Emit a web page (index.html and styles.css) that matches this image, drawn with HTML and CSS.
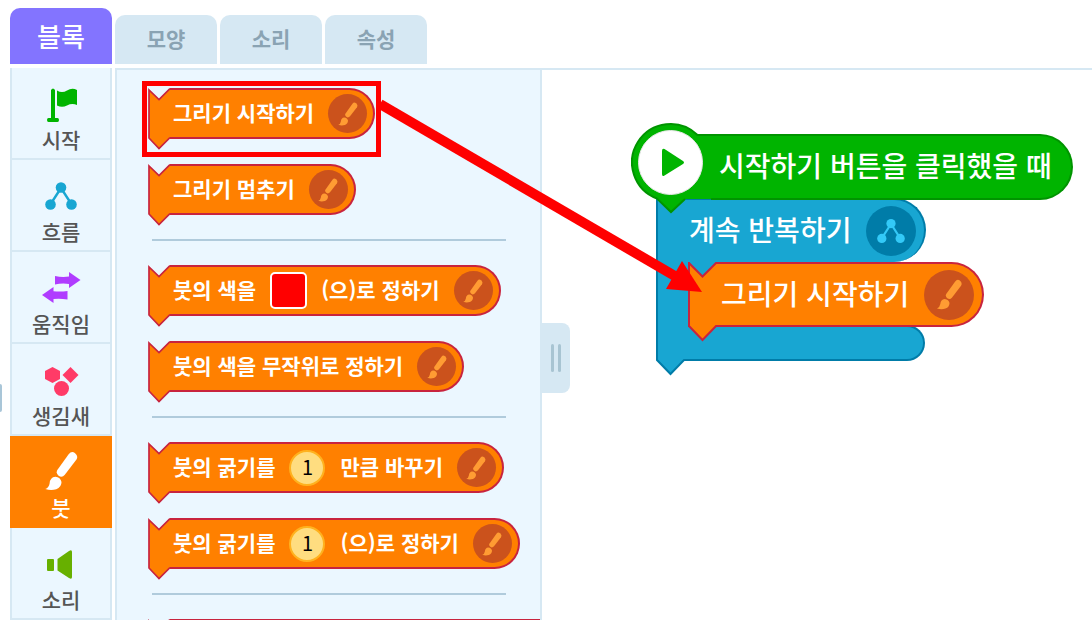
FILE: index.html
```html
<!DOCTYPE html>
<html lang="ko">
<head>
    <meta charset="UTF-8">
    <title>블록 코딩</title>
    <link rel="stylesheet" href="styles.css">
</head>
<body>
    <!-- shared icons -->
    <svg class="sprite" aria-hidden="true">
        <symbol id="brush" viewBox="0 0 34 42">
            <path d="M24.500 3.500Q27.500 -.5 31 2Q35 5 32.700 9L20.500 25Q17.500 28.500 14 26Q10.500 23 13 19.500Z"/>
            <path d="M0 40Q4 38 4.500 34Q5 27.500 10.500 27Q16 27.500 17 32.500Q17 38 11.500 40.200Q6 42 0 40Z"/>
        </symbol>
        <symbol id="flow" viewBox="0 0 32 28">
            <path d="M5 23L16 6L27 23" fill="none" stroke="currentColor" stroke-width="2.400"/>
            <circle cx="16" cy="5.500" r="5.300"/>
            <circle cx="5.500" cy="22.500" r="5.300"/>
            <circle cx="26.500" cy="22.500" r="5.300"/>
        </symbol>
        <symbol id="cap" viewBox="0 0 22 62">
            <path d="M22 50H21.500L11 60.500L1 50V2L11 11.500L21.500 1H22Z" stroke="none"/>
            <path d="M22 50H21.500L11 60.500L1 50V2L11 11.500L21.500 1H22" fill="none" stroke-width="1.700"/>
        </symbol>
    </svg>

    <nav class="tabs">
        <button type="button" class="tab active">블록</button>
        <button type="button" class="tab">모양</button>
        <button type="button" class="tab">소리</button>
        <button type="button" class="tab">속성</button>
    </nav>

    <main class="editor">
        <div class="side-grip"></div>
        <nav class="categories">
            <button type="button" class="category">
                <svg class="icon start" viewBox="0 0 40 40"><path d="M10 7Q12 4 14 7V35H16.500Q18 35 18 37T16.500 39H7.500Q6 39 6 37T7.500 35H10Z"/><path d="M16 7.500Q21 10.500 26 7.500Q31 4.500 36 7V22Q31 20 26 22.500Q21 25 16 22.500Z"/></svg>
                <span>시작</span>
            </button>
            <button type="button" class="category">
                <svg class="icon flow"><use href="#flow" x="4" y="7" width="32" height="28"/></svg>
                <span>흐름</span>
            </button>
            <button type="button" class="category">
                <svg class="icon moving" viewBox="0 0 40 40"><path d="M14 9Q21 10.500 28 9.500V5L39.500 13L28 21V17Q21 16 14 17.500Z"/><path d="M26.500 24Q19 25 12.500 24.200V20L1 28L12.500 36V32Q19 31.200 26.500 32.500Z"/></svg>
                <span>움직임</span>
            </button>
            <button type="button" class="category">
                <svg class="icon looks" viewBox="0 0 40 40"><path d="M11.500 8L19 12V20L11.500 24L4 20V12Z"/><path d="M29.500 8L37.500 16L29.500 24L21.500 16Z"/><circle cx="20.500" cy="29.500" r="7.500"/></svg>
                <span>생김새</span>
            </button>
            <button type="button" class="category selected">
                <svg class="icon"><use href="#brush" x="4" y="0" width="33" height="40"/></svg>
                <span>붓</span>
            </button>
            <button type="button" class="category">
                <svg class="icon sound" viewBox="0 0 40 40"><rect x="6" y="16" width="7" height="12" rx="1"/><path d="M16.500 16L28 8Q31 6 31 9V34Q31 37 28 35L16.500 27.500Z"/></svg>
                <span>소리</span>
            </button>
        </nav>

        <section class="palette">
            <div class="block">
                <svg class="cap"><use href="#cap"/></svg>
                <div class="face"><span>그리기 시작하기</span><span class="badge"><svg><use href="#brush"/></svg></span></div>
            </div>
            <div class="block">
                <svg class="cap"><use href="#cap"/></svg>
                <div class="face"><span>그리기 멈추기</span><span class="badge"><svg><use href="#brush"/></svg></span></div>
            </div>
            <hr>
            <div class="block">
                <svg class="cap"><use href="#cap"/></svg>
                <div class="face"><span>붓의 색을</span><button type="button" class="color" aria-label="색"></button><span>(으)로 정하기</span><span class="badge"><svg><use href="#brush"/></svg></span></div>
            </div>
            <div class="block">
                <svg class="cap"><use href="#cap"/></svg>
                <div class="face"><span>붓의 색을 무작위로 정하기</span><span class="badge"><svg><use href="#brush"/></svg></span></div>
            </div>
            <hr>
            <div class="block">
                <svg class="cap"><use href="#cap"/></svg>
                <div class="face"><span>붓의 굵기를</span><input type="text" class="number" value="1" aria-label="굵기 변화"><span>만큼 바꾸기</span><span class="badge"><svg><use href="#brush"/></svg></span></div>
            </div>
            <div class="block">
                <svg class="cap"><use href="#cap"/></svg>
                <div class="face"><span>붓의 굵기를</span><input type="text" class="number" value="1" aria-label="굵기"><span>(으)로 정하기</span><span class="badge"><svg><use href="#brush"/></svg></span></div>
            </div>
            <hr>
            <div class="block">
                <svg class="cap"><use href="#cap"/></svg>
                <div class="face wide"></div>
            </div>
        </section>

        <section class="workspace">
            <button type="button" class="handle" aria-label="블록 목록 접기"><i></i><i></i></button>
            <div class="script">
                <div class="event">
                    <svg class="play" viewBox="0 0 80 92">
                        <path d="M80 13H66.500A38.500 38.500 0 1 0 26 76.500L40 90L54 77H80Z" fill="#00b400"/>
                        <path d="M80 13H66.500A38.500 38.500 0 1 0 26 76.500L40 90L54 77" fill="none" stroke="#009400" stroke-width="2"/>
                        <circle cx="39.500" cy="40.500" r="32" fill="#fff" stroke="#e6e6e6"/>
                        <path d="M31 29Q31 26 33.500 27L52 39Q54 40.500 52 42L33.500 53.500Q31 55 31 52Z" fill="#00b400"/>
                    </svg>
                    <div class="event-face"><span>시작하기 버튼을 클릭했을 때</span></div>
                </div>
                <div class="loop">
                    <div class="stem">
                        <div class="stem-fill"></div>
                        <svg class="stem-tip" viewBox="0 0 32 18"><path d="M1 0V2L14.500 16L28 2H32V0Z" fill="#18a6d2"/><path d="M1 0V2L14.500 16L28 2H32" fill="none" stroke="#007ca8" stroke-width="2"/></svg>
                    </div>
                    <div class="loop-body">
                        <div class="loop-head"><span>계속 반복하기</span><span class="badge"><svg><use href="#flow"/></svg></span></div>
                        <div class="block large">
                            <svg class="cap" viewBox="0 0 29 80">
                                <path d="M1 0H29L14.500 16L1 4Z" fill="#18a6d2" stroke="none"/>
                                <path d="M29 64H28L14.500 78L1 64V1L14.500 14.500L28 1H29Z" stroke="none"/>
                                <path d="M29 64H28L14.500 78L1 64V1L14.500 14.500L28 1H29" fill="none" stroke-width="2"/>
                            </svg>
                            <div class="face"><span>그리기 시작하기</span><span class="badge"><svg><use href="#brush"/></svg></span></div>
                        </div>
                        <div class="loop-foot"></div>
                    </div>
                </div>
            </div>
        </section>
    </main>

    <!-- arrow from the palette block to its place in the script -->
    <svg class="guide" width="720" height="320" aria-hidden="true">
        <rect x="144.500" y="83.500" width="234" height="71" fill="none" stroke="#f00" stroke-width="5"/>
        <path d="M380 104L680 279" stroke="#f00" stroke-width="10"/>
        <path d="M702 292L666 289L682 261Z" fill="#f00"/>
    </svg>
</body>
</html>
```
FILE: styles.css
```css
* {
    box-sizing: border-box;
}
body {
    margin: 0;
    height: 100vh;
    display: flex;
    flex-direction: column;
    background-color: #fff;
    font-family: "Noto Sans CJK KR", sans-serif;
    position: relative;
}
button {
    font-family: inherit;
    border: none;
    padding: 0;
    cursor: pointer;
}
svg {
    display: block;
    fill: currentColor;
}
.sprite {
    position: absolute;
    width: 0;
    height: 0;
}

/* tabs */
.tabs {
    display: flex;
    align-items: flex-end;
    gap: 3px;
    padding: 8px 10px 4px;
}
.tab {
    width: 102px;
    height: 49px;
    padding-bottom: 4px;
    border-radius: 10px 10px 0 0;
    background-color: #d6e8f3;
    color: #8aa3b3;
    font-size: 21px;
    font-weight: 700;
}
.tab.active {
    height: 56px;
    padding-bottom: 2px;
    background-color: #8374ff;
    color: #fff;
    font-size: 26px;
    font-weight: 500;
}

/* layout */
.editor {
    flex: 1;
    min-height: 0;
    display: flex;
    overflow: hidden;
}
.side-grip {
    width: 2px;
    height: 28px;
    margin: 316px 8px 0 0;
    border-radius: 0 2px 2px 0;
    background-color: #a9c6d8;
}
.categories {
    width: 102px;
    flex-shrink: 0;
    margin-right: 3px;
}
.category {
    width: 100%;
    height: 92px;
    display: flex;
    flex-direction: column;
    align-items: center;
    justify-content: flex-end;
    padding-bottom: 4px;
    background-color: #ebf7ff;
    border: 2px solid #d6e8f3;
    border-top: none;
    color: #555;
    font-size: 21px;
    font-weight: 500;
    line-height: 30px;
}
.category.selected {
    background-color: #ff8000;
    border-color: #ff8000;
    color: #fff;
}
.icon {
    width: 40px;
    height: 40px;
    margin-bottom: 1px;
}
.start {
    color: #00b400;
}
.flow {
    color: #18a6d2;
}
.moving {
    color: #b03cff;
}
.looks {
    color: #ff3b67;
}
.sound {
    color: #67b000;
}

/* block list */
.palette {
    width: 427px;
    flex-shrink: 0;
    padding: 18px 0 0 31px;
    background-color: #ebf7ff;
    border: 2px solid #d6e8f3;
    border-bottom: none;
    overflow: hidden;
}
.palette hr {
    width: 354px;
    height: 2px;
    margin: 24px 0 24px 4px;
    border: none;
    background-color: #b0cbdc;
}
.block {
    display: flex;
    align-items: flex-start;
    height: 51px;
    color: #ff8000;
    stroke: #c8243e;
}
.block + .block {
    margin-top: 25px;
}
.cap {
    width: 22px;
    height: 62px;
    flex-shrink: 0;
}
.face {
    display: flex;
    align-items: center;
    gap: 14px;
    height: 51px;
    padding: 0 6px 0 3px;
    background-color: #ff8000;
    border: 2px solid #c8243e;
    border-left: none;
    border-radius: 0 26px 26px 0;
    color: #fff;
    font-size: 21px;
    font-weight: 700;
    white-space: nowrap;
    stroke: none;
}
.face > span:not(.badge),
.loop-head > span:not(.badge),
.event-face > span {
    padding-bottom: 4px;
}
.face.wide {
    width: 450px;
    flex-shrink: 0;
}
.badge {
    width: 39px;
    height: 39px;
    display: flex;
    align-items: center;
    justify-content: center;
    border-radius: 50%;
    background-color: #cb521c;
    color: #ff9c33;
}
.badge svg {
    width: 20px;
    height: 24px;
}
.color {
    width: 37px;
    height: 37px;
    border: 2px solid #fff;
    border-radius: 5px;
    background-color: #f00;
}
.number {
    width: 36px;
    height: 36px;
    margin-right: 1px;
    padding: 0 0 2px;
    border: 2px solid #ffb21f;
    border-radius: 50%;
    background-color: #ffdd80;
    color: #000;
    font-family: inherit;
    font-size: 20px;
    text-align: center;
}

/* workspace */
.workspace {
    flex: 1;
    display: flex;
    align-items: flex-start;
    border-top: 2px solid #d6e8f3;
}
.handle {
    display: flex;
    align-items: center;
    justify-content: center;
    gap: 4px;
    width: 28px;
    height: 70px;
    margin-top: 253px;
    border-radius: 0 8px 8px 0;
    background-color: #d6e8f3;
}
.handle i {
    width: 3px;
    height: 28px;
    border-radius: 2px;
    background-color: #a8c4d2;
}
.script {
    padding: 52px 0 0 61px;
    color: #fff;
    font-size: 28px;
    font-weight: 500;
    white-space: nowrap;
}
.event {
    position: relative;
    z-index: 1;
    display: flex;
    align-items: flex-start;
    height: 76px;
}
.play {
    width: 80px;
    height: 92px;
}
.event-face {
    display: flex;
    align-items: center;
    height: 66px;
    margin-top: 12px;
    padding: 0 19px 0 8px;
    background-color: #00b400;
    border: 2px solid #009400;
    border-left: none;
    border-radius: 0 33px 33px 0;
}
.loop {
    display: flex;
    margin-left: 25px;
}
.stem {
    display: flex;
    flex-direction: column;
    width: 32px;
    margin-bottom: -15px;
}
.stem-fill {
    flex: 1;
    background-color: #18a6d2;
    border-top: 2px solid #007ca8;
    border-left: 2px solid #007ca8;
}
.stem-tip {
    width: 32px;
    height: 18px;
}
.loop-head {
    display: flex;
    align-items: center;
    gap: 15px;
    width: fit-content;
    height: 64px;
    padding: 0 8px 0 1px;
    background-color: #18a6d2;
    border: 2px solid #007ca8;
    border-left: none;
    border-bottom: none;
    border-radius: 0 32px 32px 0;
}
.loop-head .badge {
    width: 50px;
    height: 50px;
    background-color: #007ca8;
    color: #33c9f7;
}
.loop-head .badge svg {
    width: 28px;
    height: 26px;
}
.loop-foot {
    width: 237px;
    height: 36px;
    margin-top: -2px;
    background-color: #18a6d2;
    border: 2px solid #007ca8;
    border-left: none;
    border-radius: 0 18px 18px 0;
}
.large {
    position: relative;
    height: 65px;
}
.large .cap {
    width: 29px;
    height: 80px;
}
.large .face {
    height: 65px;
    gap: 15px;
    padding: 0 8px 0 4px;
    border-radius: 0 33px 33px 0;
    font-size: 28px;
    font-weight: 500;
}
.large .badge {
    width: 50px;
    height: 50px;
}
.large .badge svg {
    width: 25px;
    height: 31px;
}

.guide {
    position: absolute;
    top: 0;
    left: 0;
    pointer-events: none;
}
```
